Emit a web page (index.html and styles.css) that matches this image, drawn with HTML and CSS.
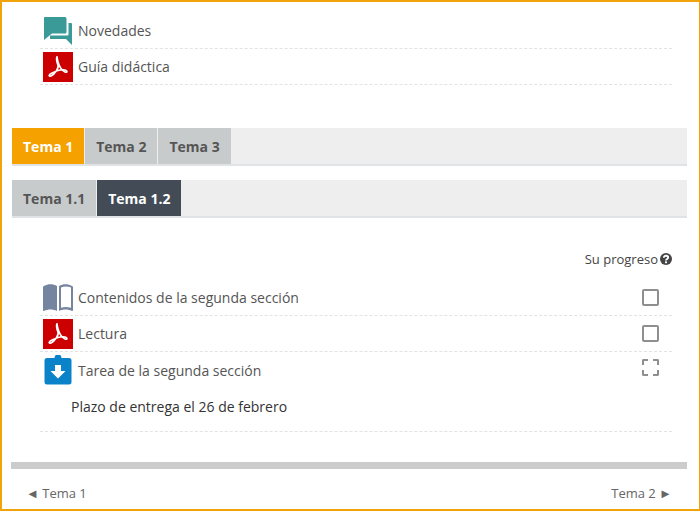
FILE: index.html
```html
<!DOCTYPE html>
<html lang="es">
  <head>
    <meta charset="UTF-8" />
    <title>Tema 1.2</title>
    <link rel="stylesheet" href="styles.css">
  </head>
  <body>
    <div class="frame">
      <ul class="activities top-list">
        <li class="activity">
          <svg class="icon" viewBox="0 0 30 30"><path fill="#399a98" d="M2 1h20a1.500 1.500 0 0 1 1.500 1.500V16a1.500 1.500 0 0 1-1.500 1.500H9L1 24V2a1 1 0 0 1 1-1z"/><path fill="#399a98" d="M25.500 7H28a1 1 0 0 1 1 1v21l-6-6H7v-3.500h17.500a1 1 0 0 0 1-1z"/></svg>
          <span>Novedades</span>
        </li>
        <li class="activity">
          <svg class="icon" viewBox="0 0 30 30"><rect width="30" height="30" fill="#cc0000"/><path fill="none" stroke="#fff" stroke-width="1.700" d="M14 5c-1 1 0 6 1 8 1 3-3 9-7 11-3 1-2-2 1-3 4-2 9-4 13-3 3 1 2 3 0 2-3-1-6-6-7-10-1-3-1-6-1-5z"/></svg>
          <span>Guía didáctica</span>
        </li>
      </ul>

      <div class="tabs first-tabs">
        <a class="tab orange">Tema 1</a>
        <a class="tab">Tema 2</a>
        <a class="tab">Tema 3</a>
      </div>
      <div class="tabs second-tabs">
        <a class="tab">Tema 1.1</a>
        <a class="tab dark">Tema 1.2</a>
      </div>

      <div class="progress">
        Su progreso
        <svg class="help" viewBox="0 0 12 12"><circle cx="6" cy="6" r="6" fill="#444"/><path fill="none" stroke="#fff" stroke-width="1.800" d="M3.800 4.700C3.800 2 8.200 2.200 8.200 4.500c0 1.500-2.200 1.500-2.200 3"/><rect x="5" y="8.400" width="2" height="1.800" fill="#fff"/></svg>
      </div>

      <ul class="activities section-list">
        <li class="activity">
          <svg class="icon" viewBox="0 0 30 30"><path fill="#76859f" d="M1 3c4-2.500 9-2.500 13 0v25c-4-2-9-2-13 0-.6 0-1-.4-1-1V4c0-.4.400-.8 1-1z"/><path fill="#76859f" d="M16 3c4-2.500 9-2.500 13 0 .6.200 1 .6 1 1v23c0 .6-.4 1-1 1-4-2-9-2-13 0zm2 1.500v20.300c3-1 6-1 10 0V4.500c-3-1.500-7-1.500-10 0z"/></svg>
          <span class="name">Contenidos de la segunda sección</span>
          <span class="check"></span>
        </li>
        <li class="activity">
          <svg class="icon" viewBox="0 0 30 30"><rect width="30" height="30" fill="#cc0000"/><path fill="none" stroke="#fff" stroke-width="1.700" d="M14 5c-1 1 0 6 1 8 1 3-3 9-7 11-3 1-2-2 1-3 4-2 9-4 13-3 3 1 2 3 0 2-3-1-6-6-7-10-1-3-1-6-1-5z"/></svg>
          <span class="name">Lectura</span>
          <span class="check"></span>
        </li>
        <li class="activity assignment">
          <div class="assignment-row">
            <svg class="icon" viewBox="0 0 30 30"><path fill="#0a83c8" d="M4 3h7.500a3.500 3.500 0 0 1 7 0H26a2.500 2.500 0 0 1 2.500 2.500V27a2.500 2.500 0 0 1-2.500 2.500H4A2.500 2.500 0 0 1 1.500 27V5.500A2.500 2.500 0 0 1 4 3z"/><path fill="#fff" d="M12 10h6v6h4.500L15 23.500 7.500 16H12z"/></svg>
            <span class="name">Tarea de la segunda sección</span>
            <span class="check auto"></span>
          </div>
          <p class="deadline">Plazo de entrega el 26 de febrero</p>
        </li>
      </ul>

      <div class="divider"></div>

      <div class="nav-links">
        <a>◄ Tema 1</a>
        <a>Tema 2 ►</a>
      </div>
    </div>
  </body>
</html>
```

FILE: styles.css
```css
* {
  box-sizing: border-box;
}

html, body {
  margin: 0;
  height: 100%;
}

body {
  font-family: 'Open Sans', sans-serif;
  font-size: 14px;
  color: #555;
  background: #fff;
}

.frame {
  height: 511px;
  border: 2px solid #f0a30a;
  border-width: 2px 1px 2px 2px;
  padding: 0 12px 0 9px;
  overflow: hidden;
}

.activities {
  list-style: none;
  margin: 0;
  padding: 0 15px 0 29px;
}

.top-list {
  padding-top: 11px;
}

.activity {
  display: flex;
  align-items: center;
  height: 36px;
  border-bottom: 1px dashed #e3e3e3;
}

.icon {
  width: 30px;
  height: 30px;
  margin: 0 5px 0 3px;
  flex: none;
}

.name {
  flex: 1;
}

.check {
  width: 17px;
  height: 17px;
  margin-right: 13px;
  border: 2px solid #8f8f8f;
  border-radius: 2px;
}

.check.auto {
  border-style: dashed;
  margin-top: -6px;
}

.tabs {
  display: flex;
  height: 38px;
  gap: 1px;
  margin-left: 1px;
  background: #eeeeee;
  border-bottom: 2px solid #dfe3e6;
}

.first-tabs {
  margin-top: 43px;
}

.second-tabs {
  margin-top: 14px;
}

.tab {
  display: flex;
  align-items: center;
  padding: 0 11px;
  font-weight: 700;
  color: #555;
  background: #c8cbcc;
}

.tab.orange {
  color: #fff;
  background: #f5a100;
}

.tab.dark {
  color: #fff;
  background: #434c56;
}

.progress {
  display: flex;
  justify-content: flex-end;
  align-items: center;
  gap: 2px;
  margin-top: 31px;
  padding-right: 15px;
  color: #444;
  font-size: 13px;
  height: 20px;
}

.help {
  width: 12px;
  height: 12px;
}

.section-list {
  margin-top: 11px;
}

.assignment {
  display: block;
  height: 80px;
}

.assignment-row {
  display: flex;
  align-items: center;
  height: 36px;
}

.deadline {
  margin: 9px 0 0 31px;
  color: #333;
}

.divider {
  height: 7px;
  margin-top: 30px;
  background: #cccccc;
}

.nav-links {
  display: flex;
  justify-content: space-between;
  margin-top: 15px;
  padding: 0 15px 0 15px;
  font-size: 13px;
  color: #666;
}
```
